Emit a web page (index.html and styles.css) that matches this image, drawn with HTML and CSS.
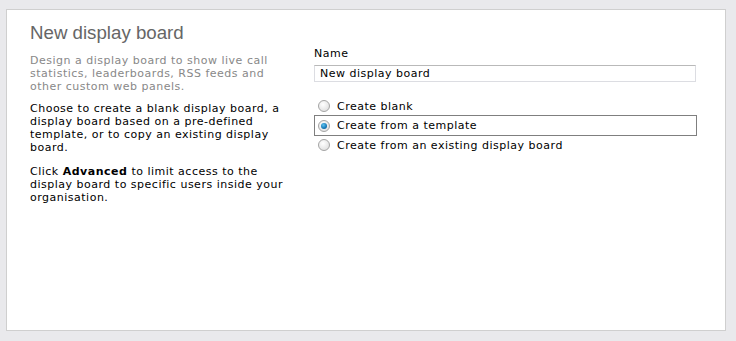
FILE: index.html
```html
<!DOCTYPE html>
<html lang="en">
<head>
    <meta charset="UTF-8">
    <title>New display board</title>
    <link rel="stylesheet" href="styles.css">
</head>
<body>
    <div class="wizard-panel">
        <div class="wizard-intro">
            <h2 class="wizard-title">New display board</h2>
            <p class="intro-lead">Design a display board to show live call statistics, leaderboards, RSS feeds and other custom web panels.</p>
            <p class="intro-text">Choose to create a blank display board, a display board based on a pre-defined template, or to copy an existing display board.</p>
            <p class="intro-text">Click <strong>Advanced</strong> to limit access to the display board to specific users inside your organisation.</p>
        </div>

        <div class="wizard-form">
            <label for="boardName" class="field-label">Name</label>
            <input type="text" id="boardName" class="field-input" value="New display board">

            <div class="option-list">
                <label class="option-row">
                    <span class="radio"></span>
                    Create blank
                </label>
                <label class="option-row selected">
                    <span class="radio checked"></span>
                    Create from a template
                </label>
                <label class="option-row">
                    <span class="radio"></span>
                    Create from an existing display board
                </label>
            </div>
        </div>
    </div>
</body>
</html>
```

FILE: styles.css
```css
/* Page */
body {
    margin: 0;
    background-color: #e9e9ec;
    font-family: 'DejaVu Sans', Verdana, sans-serif;
    font-size: 11px;
    letter-spacing: 0.5px;
    color: #000;
}

/* Main panel */
.wizard-panel {
    box-sizing: border-box;
    margin: 9px 0 0 6px;
    width: 720px;
    height: 322px;
    background-color: #fff;
    border: 1px solid #cfcfcf;
    padding: 11px 28px 0 23px;
    display: flex;
    gap: 30px;
}

/* Left column */
.wizard-intro {
    width: 255px;
}

.wizard-title {
    margin: 0 0 9px;
    font-family: 'Liberation Sans', Arial, sans-serif;
    font-size: 18.7px;
    font-weight: normal;
    letter-spacing: 0;
    line-height: 24px;
    color: #666;
}

.intro-lead,
.intro-text {
    margin: 0 0 11px;
    line-height: 13px;
}

.intro-lead {
    margin-bottom: 9px;
    color: #888;
}

/* Right column */
.wizard-form {
    flex: 1;
    padding-top: 26px;
}

.field-label {
    display: block;
    line-height: 13px;
    margin-bottom: 5px;
}

.field-input {
    box-sizing: border-box;
    display: block;
    width: 382px;
    height: 17px;
    margin: 0;
    padding: 0 5px;
    border: 1px solid #dcdde2;
    border-top-color: #b9b9b9;
    font-family: inherit;
    font-size: 11px;
    letter-spacing: 0.5px;
    color: #000;
    outline: none;
}

.option-list {
    margin-top: 15px;
    width: 383px;
}

.option-row {
    display: flex;
    align-items: center;
    gap: 7px;
    height: 16px;
    padding: 0 3px;
    border: 1px solid transparent;
}

.option-row.selected {
    height: 19px;
    border-color: #7f7f7f;
}

.radio {
    box-sizing: border-box;
    width: 12px;
    height: 12px;
    border-radius: 50%;
    border: 1px solid #a4a4a4;
    background: radial-gradient(circle at 40% 35%, #fff 0%, #e4e4e4 70%, #d0d0d0 100%);
    position: relative;
}

.radio.checked::after {
    content: '';
    position: absolute;
    left: 2px;
    top: 2px;
    width: 6px;
    height: 6px;
    border-radius: 50%;
    background: radial-gradient(circle at 40% 35%, #5fc3f0 0%, #1577b6 60%, #0d4f82 100%);
}
```
